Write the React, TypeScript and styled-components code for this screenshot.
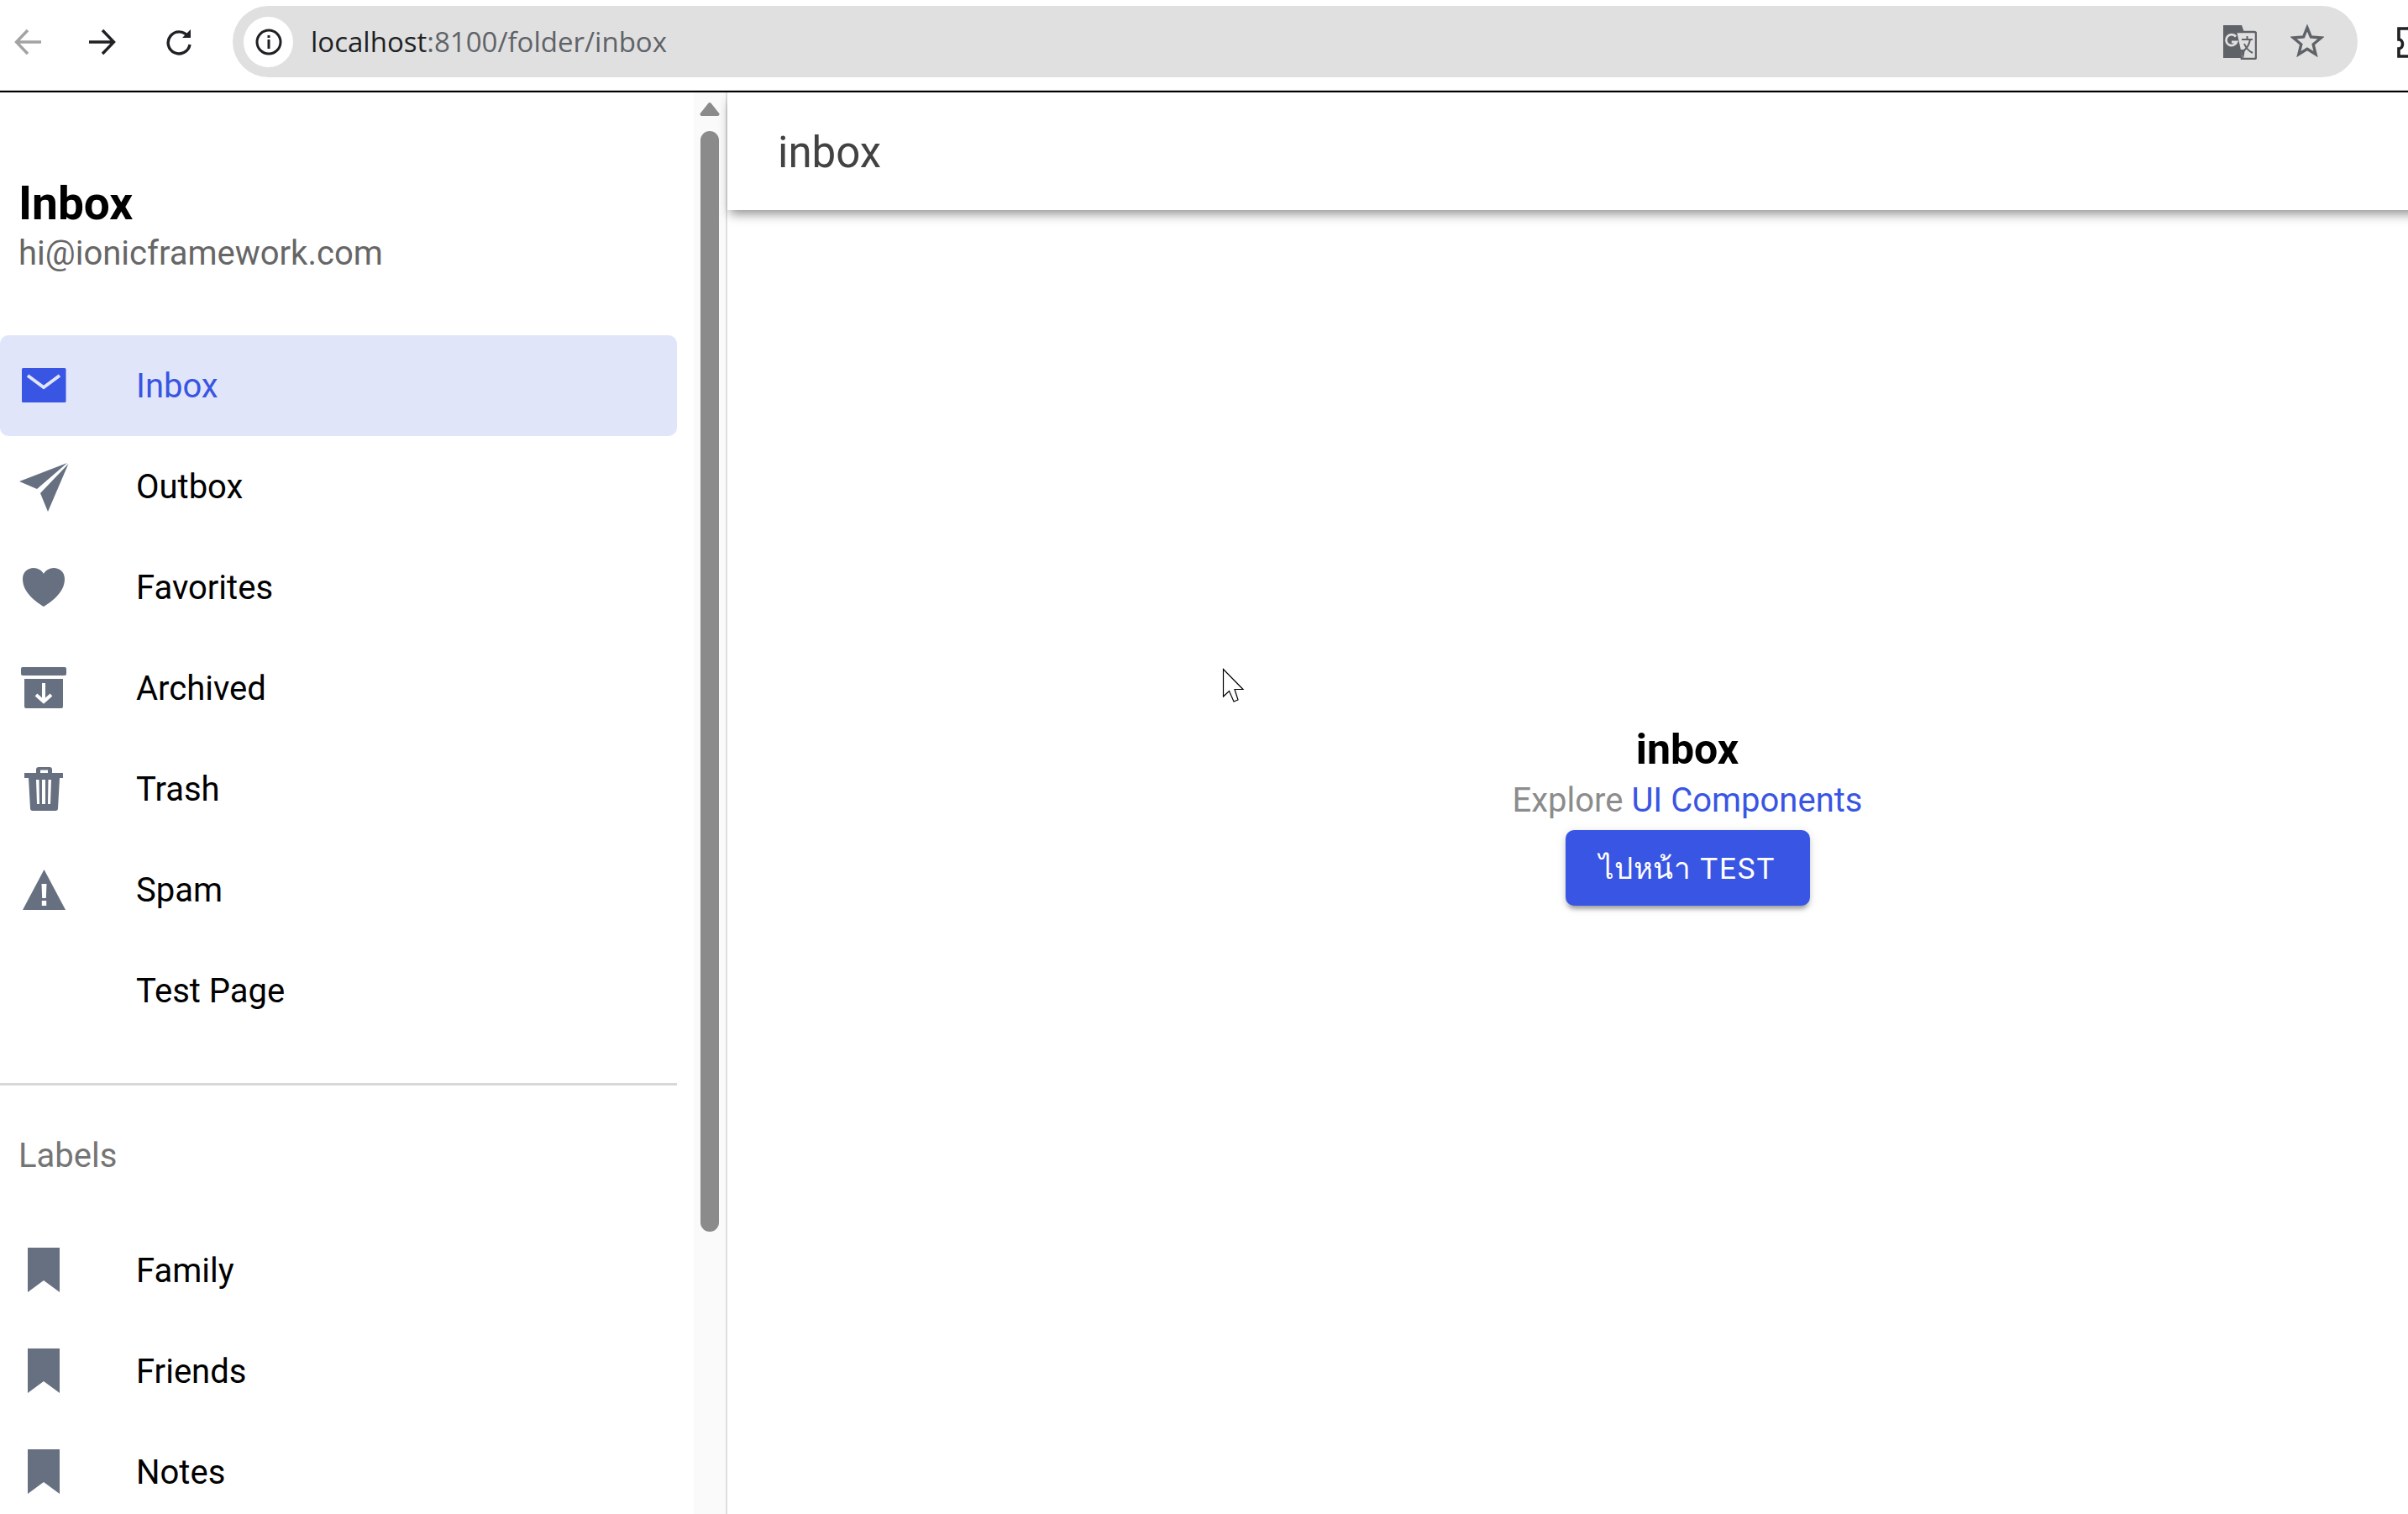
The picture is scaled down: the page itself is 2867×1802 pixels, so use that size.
import React from "react";
import styled, { createGlobalStyle } from "styled-components";

const Global = createGlobalStyle`
  html, body { margin: 0; padding: 0; height: 100%; background: #fff; overflow: hidden; }
  body { font-family: Roboto, "Noto Sans", "DejaVu Sans", sans-serif; }
  * { box-sizing: border-box; }
`;

const Page = styled.div`
  width: 2867px;
  height: 1802px;
  overflow: hidden;
  display: flex;
  flex-direction: column;
  position: relative;
`;

const BrowserBar = styled.header`
  flex: 0 0 110px;
  width: 2900px;
  display: flex;
  align-items: flex-start;
  padding: 7px 0 0 17px;
  background: #fff;
  border-bottom: 2px solid #000;
  box-shadow: inset 0 -1px 0 #c8c8c8;
`;

const ChromeButton = styled.span<{ $w: number; $mr: number }>`
  flex: 0 0 ${(p) => p.$w}px;
  width: ${(p) => p.$w}px;
  height: 32px;
  margin: 27px ${(p) => p.$mr}px 0 0;
  display: block;
  svg { display: block; }
`;

const Omnibox = styled.div`
  flex: 0 0 2530px;
  height: 85px;
  border-radius: 43px;
  background: #e0e0e0;
  display: flex;
  align-items: center;
  padding: 0 40px 0 13px;
`;

const InfoChip = styled.span`
  flex: 0 0 59px;
  height: 60px;
  border-radius: 50%;
  background: #fff;
  display: flex;
  align-items: center;
  justify-content: center;
  margin-right: 21px;
`;

const Url = styled.div`
  flex: 1;
  font-family: "Open Sans", sans-serif;
  font-size: 33px;
  color: #5f6368;
  b { font-weight: 400; color: #202124; }
`;

const OmniIcon = styled.span<{ $mr: number }>`
  display: block;
  margin-right: ${(p) => p.$mr}px;
  height: 42px;
  svg { display: block; }
`;

const PuzzleSlot = styled.span`
  margin: 24px 0 0 47px;
  display: block;
`;

const Body = styled.div`
  flex: 1;
  display: flex;
  min-height: 0;
`;

const Side = styled.aside`
  flex: 0 0 866px;
  display: flex;
  border-right: 2px solid #dedede;
  overflow: hidden;
`;

const Nav = styled.nav`
  flex: 0 0 806px;
  padding-top: 97px;
`;

const MenuTitle = styled.h1`
  margin: 0 0 2px;
  padding-left: 22px;
  font-size: 55px;
  line-height: 70px;
  font-weight: 700;
  color: #000;
`;

const MenuNote = styled.p`
  margin: 0 0 74px;
  padding-left: 22px;
  font-size: 40px;
  line-height: 46px;
  color: #666;
`;

const Row = styled.a<{ $active?: boolean }>`
  height: ${(p) => (p.$active ? "119.5px" : "120px")};
  display: flex;
  align-items: center;
  padding-left: 22px;
  border-radius: 10px;
  font-size: 40px;
  color: ${(p) => (p.$active ? "#3955e3" : "#000")};
  background: ${(p) => (p.$active ? "#e1e5fa" : "transparent")};
`;

const RowLabel = styled.span`
  padding-top: 2px;
`;

const IconBox = styled.span`
  flex: 0 0 60px;
  width: 60px;
  height: 60px;
  margin-right: 80px;
  svg { display: block; }
`;

const Divider = styled.hr`
  margin: 50px 0 0;
  border: 0;
  height: 3px;
  background: #d7d8da;
`;

const LabelsHead = styled.div`
  height: 160px;
  padding: 8px 0 0 22px;
  display: flex;
  align-items: center;
  font-size: 40px;
  color: #757575;
`;

const Track = styled.div`
  flex: 1;
  margin-left: 20px;
  background: #fafafa;
  display: flex;
  flex-direction: column;
  align-items: center;
  padding-top: 11px;
`;

const Thumb = styled.div`
  width: 22px;
  height: 1310px;
  margin-top: 17px;
  border-radius: 11px;
  background: #8b8b8b;
`;

const Main = styled.main`
  flex: 0 0 2286px;
  display: flex;
  flex-direction: column;
`;

const TopBar = styled.div`
  flex: 0 0 140px;
  display: flex;
  align-items: center;
  padding: 2px 0 0 60px;
  font-size: 51px;
  color: #424242;
  background: #fff;
  position: relative;
  box-shadow: 0 8px 12px -3px rgba(0, 0, 0, 0.42);
`;

const Center = styled.div`
  padding-top: 610px;
  text-align: center;
`;

const Strong = styled.strong`
  display: block;
  font-size: 50px;
  line-height: 65px;
  font-weight: 700;
  color: #000;
`;

const Sub = styled.p`
  margin: 0 0 8px;
  font-size: 40px;
  line-height: 55px;
  color: #8c8c8c;
  a { color: #3955e3; text-decoration: none; }
`;

const Btn = styled.button`
  width: 291px;
  height: 90px;
  border: 0;
  border-radius: 10px;
  background: #3955e3;
  color: #fff;
  font-family: Roboto, "Noto Sans", "DejaVu Sans", sans-serif;
  font-size: 35px;
  font-weight: 400;
  letter-spacing: 1.9px;
  box-shadow: 0 7px 4px -4px rgba(0, 0, 0, 0.2), 0 5px 5px 0 rgba(0, 0, 0, 0.14), 0 2px 12px 0 rgba(0, 0, 0, 0.12);
`;

const Thai = styled.span`
  letter-spacing: 0.6px;
`;

const Cursor = styled.svg`
  position: absolute;
  left: 1455px;
  top: 795px;
`;

const G = "#667080";

const Mail = () => (
  <svg width="60" height="60" viewBox="0 0 60 60">
    <rect x="4" y="9" width="52.5" height="41" rx="1.5" fill="#3955e3" />
    <path d="M11 18 L30 32 L49 18" fill="none" stroke="#e1e5fa" strokeWidth="4" />
  </svg>
);
const Plane = () => (
  <svg width="60" height="60" viewBox="0 0 60 60" fill={G}>
    <path d="M58 2 L1 24 L22 33 Z" />
    <path d="M59.5 3 L26 38 L35 60 Z" />
  </svg>
);
const Heart = () => (
  <svg width="60" height="60" viewBox="0 0 60 60" fill={G}>
    <path d="M30 53 C24 49 5 38 5 20 C5 12 11 7 18 7 C23 7 28 10 30 14 C32 10 37 7 42 7 C49 7 55 12 55 20 C55 38 36 49 30 53 Z" />
  </svg>
);
const Archive = () => (
  <svg width="60" height="60" viewBox="0 0 60 60">
    <rect x="3" y="5" width="54" height="10" rx="2" fill={G} />
    <path d="M7 19 H53 V52 a2 2 0 0 1 -2 2 H9 a2 2 0 0 1 -2 -2 Z" fill={G} />
    <path d="M30 24 V46 M21 38 L30 46 L39 38" fill="none" stroke="#fff" strokeWidth="4" />
  </svg>
);
const Trash = () => (
  <svg width="60" height="60" viewBox="0 0 60 60">
    <path fillRule="evenodd" d="M21 11 V7 a3 3 0 0 1 3 -3 H37 a3 3 0 0 1 3 3 V11 H53 V17 H49 L47 53 a3 3 0 0 1 -3 3 H17 a3 3 0 0 1 -3 -3 L12 17 H7 V11 Z M26 7.5 V11 H35 V7.5 Z M21 19 L22 48 H25 L24.5 19 Z M28 19 V48 H32 V19 Z M35.5 19 L35 48 H38 L39 19 Z" fill={G} />
  </svg>
);
const Warn = () => (
  <svg width="60" height="60" viewBox="0 0 60 60">
    <path d="M30.5 6 L56 54 H5 Z" fill={G} />
    <path d="M27.5 23 H33.5 L32.8 40 H28.2 Z M27.8 43 H33.2 V49 H27.8 Z" fill="#fff" />
  </svg>
);
const Bookmark = () => (
  <svg width="60" height="60" viewBox="0 0 60 60">
    <path d="M11 3 H49 V56 L30 42 L11 56 Z" fill={G} />
  </svg>
);

const main = [
  { t: "Inbox", i: <Mail />, a: true },
  { t: "Outbox", i: <Plane /> },
  { t: "Favorites", i: <Heart /> },
  { t: "Archived", i: <Archive /> },
  { t: "Trash", i: <Trash /> },
  { t: "Spam", i: <Warn /> },
  { t: "Test Page", i: null },
];
const labels = ["Family", "Friends", "Notes"];

export default function App() {
  return (
    <Page>
      <Global />
      <BrowserBar>
        <ChromeButton $w={32} $mr={57}>
          <svg width="32" height="32" viewBox="0 0 32 32" fill="none" stroke="#a3a3a3" strokeWidth="3.4">
            <path d="M32 16 H3 M16 2 L2.5 16 L16 30" />
          </svg>
        </ChromeButton>
        <ChromeButton $w={32} $mr={59}>
          <svg width="32" height="32" viewBox="0 0 32 32" fill="none" stroke="#202124" strokeWidth="3.4">
            <path d="M0 16 H29 M16 2 L29.5 16 L16 30" />
          </svg>
        </ChromeButton>
        <ChromeButton $w={32} $mr={48}>
          <svg width="32" height="32" viewBox="0 0 32 32" fill="none" stroke="#202124" strokeWidth="3.4">
            <path d="M26.5 9 A13 13 0 1 0 29 19" />
            <path d="M30 1 V11 H20 Z" fill="#202124" stroke="none" />
          </svg>
        </ChromeButton>
        <Omnibox>
          <InfoChip>
            <svg width="32" height="32" viewBox="0 0 32 32" fill="none" stroke="#202124" strokeWidth="3">
              <circle cx="16" cy="16" r="14" />
              <path d="M16 13 V24 M16 8 V11" />
            </svg>
          </InfoChip>
          <Url><b>localhost</b>:8100/folder/inbox</Url>
          <OmniIcon $mr={40}>
            <svg width="42" height="42" viewBox="0 0 42 42">
              <path d="M2 2 H24 L38 41 H2 a0 0 0 0 1 0 0 Z" fill="#5f6368" transform="translate(0 -1)" />
              <path d="M17 9 H39 a2 2 0 0 1 2 2 V39 a2 2 0 0 1 -2 2 H24 Z" fill="#e0e0e0" stroke="#5f6368" strokeWidth="2.5" />
              <path d="M26 41 L22 30 H28 Z" fill="#5f6368" />
              <path d="M24 18 H37 M30.5 14 V18 M34 18 C33 25 29 30 24 33 M27 23 C29 28 33 32 37 34" fill="none" stroke="#5f6368" strokeWidth="2" />
              <path d="M17 14.5 A6.5 6.5 0 1 0 18 21 H12" fill="none" stroke="#e0e0e0" strokeWidth="2.8" />
            </svg>
          </OmniIcon>
          <OmniIcon $mr={0}>
            <svg width="40" height="40" viewBox="0 0 40 40" fill="none" stroke="#5f6368" strokeWidth="3.4" strokeLinejoin="miter">
              <path d="M20 4 L24.4 15 L36.5 16 L27.2 23.8 L30.1 35.5 L20 29.2 L9.9 35.5 L12.8 23.8 L3.5 16 L15.6 15 Z" />
            </svg>
          </OmniIcon>
        </Omnibox>
        <PuzzleSlot>
          <svg width="40" height="40" viewBox="0 0 40 40" fill="none" stroke="#202124" strokeWidth="3.6">
            <path d="M2 3 H14 C14 -1 24 -1 24 3 H36 V36 H2 V27 C8 27 8 16 2 16 Z" />
          </svg>
        </PuzzleSlot>
      </BrowserBar>
      <Body>
        <Side>
          <Nav>
            <MenuTitle>Inbox</MenuTitle>
            <MenuNote>hi@ionicframework.com</MenuNote>
            {main.map((m) => (
              <Row key={m.t} $active={m.a}>
                <IconBox>{m.i}</IconBox>
                <RowLabel>{m.t}</RowLabel>
              </Row>
            ))}
            <Divider />
            <LabelsHead>Labels</LabelsHead>
            {labels.map((l) => (
              <Row key={l}>
                <IconBox><Bookmark /></IconBox>
                <RowLabel>{l}</RowLabel>
              </Row>
            ))}
          </Nav>
          <Track>
            <svg width="24" height="18" viewBox="0 0 24 18">
              <path d="M12 3 L21.5 15 H2.5 Z" fill="#8b8b8b" stroke="#8b8b8b" strokeWidth="4" strokeLinejoin="round" />
            </svg>
            <Thumb />
          </Track>
        </Side>
        <Main>
          <TopBar>inbox</TopBar>
          <Center>
            <Strong>inbox</Strong>
            <Sub>Explore <a>UI Components</a></Sub>
            <Btn><Thai>ไปหน้า</Thai> TEST</Btn>
          </Center>
        </Main>
      </Body>
      <Cursor width="28" height="42" viewBox="0 0 28 42">
        <path d="M1.5 1.5 V34 L8.5 27.5 L14 40 L19 38 L15 25.5 L25 25.5 Z" fill="#fff" stroke="#000" strokeWidth="1.2" />
      </Cursor>
    </Page>
  );
}
